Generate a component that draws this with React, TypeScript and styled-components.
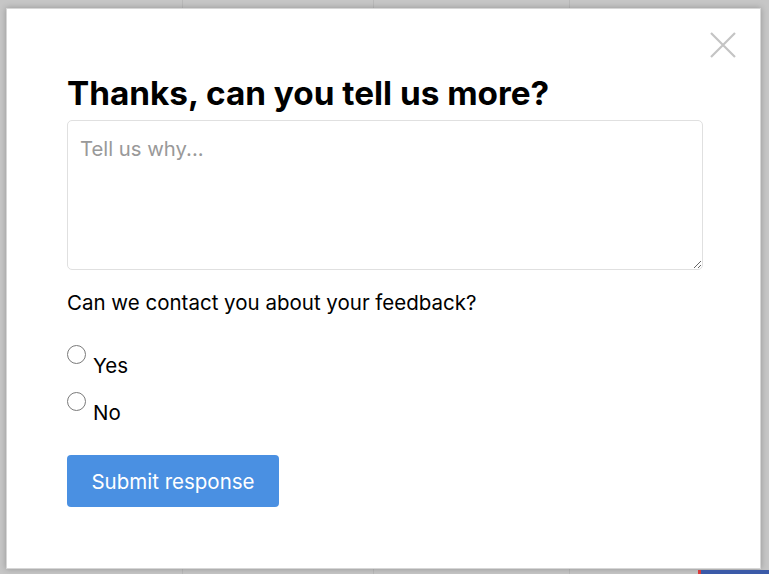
import React, { FunctionComponent, useState } from 'react'
import styled, { createGlobalStyle } from 'styled-components'

const GlobalStyle = createGlobalStyle`
  html, body {
    margin: 0;
    padding: 0;
    height: 100%;
  }
  body {
    background-color: #c9c9c9;
    font-family: Inter, "Liberation Sans", Arial, sans-serif;
    overflow: hidden;
  }
`

const Backdrop = styled.div`
  position: relative;
  width: 769px;
  height: 574px;
  box-sizing: border-box;
  padding: 8px 8px 5px 6px;
  background-color: #c6c6c6;
  background-image: linear-gradient(
    to right,
    transparent 182px,
    #b9b9b9 182px,
    #b9b9b9 183px,
    transparent 183px,
    transparent 373px,
    #b9b9b9 373px,
    #b9b9b9 374px,
    transparent 374px,
    transparent 569px,
    #b9b9b9 569px,
    #b9b9b9 570px,
    transparent 570px
  );
`

const Modal = styled.div`
  position: relative;
  height: 100%;
  box-sizing: border-box;
  background-color: #fff;
  border: 1px solid #d6d6d6;
  box-shadow: 0 0 6px rgba(0, 0, 0, 0.25);
  padding: 64px 57px 0 60px;
  display: flex;
  flex-direction: column;
`

const CloseButton = styled.button`
  position: absolute;
  top: 23px;
  right: 24px;
  width: 26px;
  height: 26px;
  padding: 0;
  border: none;
  background: none;
  cursor: pointer;
  color: #c4c4c4;
`

const Title = styled.h2`
  margin: 0 0 7px;
  font-size: 33.3px;
  line-height: 40px;
  font-weight: 700;
  color: #000;
`

const Reason = styled.textarea`
  display: block;
  width: 100%;
  height: 150px;
  box-sizing: border-box;
  border: 1px solid #e0e0e0;
  border-radius: 5px;
  padding: 16px 12px;
  font-family: inherit;
  font-size: 20.3px;
  line-height: 24px;
  color: #333;
  resize: vertical;
  outline: none;
  &::placeholder {
    color: #999;
  }
`

const Question = styled.p`
  margin: 21px 0 30px;
  font-size: 20.5px;
  line-height: 24px;
  color: #000;
`

const Options = styled.div`
  display: flex;
  flex-direction: column;
  gap: 14px;
`

const Option = styled.label`
  display: flex;
  align-items: flex-start;
  gap: 7px;
  cursor: pointer;
`

const RadioCircle = styled.span<{ checked: boolean }>`
  width: 19px;
  height: 19px;
  box-sizing: border-box;
  border-radius: 50%;
  border: 1px solid ${({ checked }) => (checked ? '#4a90e2' : '#7a7a7a')};
  background: ${({ checked }) => (checked ? 'radial-gradient(#4a90e2 4px, #fff 5px)' : '#fff')};
  flex-shrink: 0;
`

const HiddenRadio = styled.input`
  display: none;
`

const OptionText = styled.span`
  margin-top: 9px;
  font-size: 20.5px;
  line-height: 24px;
  color: #000;
`

const SubmitButton = styled.button`
  align-self: flex-start;
  margin-top: 30px;
  width: 212px;
  height: 52px;
  border: none;
  border-radius: 4px;
  background-color: #4a90e2;
  color: #fff;
  font-family: inherit;
  font-size: 20.5px;
  cursor: pointer;
`

const Taskbar = styled.div`
  position: absolute;
  right: 0;
  bottom: 0;
  width: 68px;
  height: 4px;
  background-color: #3b5aa8;
  border-left: 3px solid #d93a3a;
`

const CloseIcon = () => (
  <svg width="26" height="26" viewBox="0 0 26 26" fill="none">
    <path d="M1 1 L25 25 M25 1 L1 25" stroke="currentColor" strokeWidth="2.2" />
  </svg>
)

const App: FunctionComponent = () => {
  const [contact, setContact] = useState<string>('')
  const [reason, setReason] = useState<string>('')

  return (
    <Backdrop>
      <GlobalStyle />
      <Modal>
        <CloseButton aria-label="Close">
          <CloseIcon />
        </CloseButton>
        <Title>Thanks, can you tell us more?</Title>
        <Reason placeholder="Tell us why..." value={reason} onChange={e => setReason(e.target.value)} />
        <Question>Can we contact you about your feedback?</Question>
        <Options>
          {['Yes', 'No'].map(option => (
            <Option key={option}>
              <HiddenRadio
                type="radio"
                name="contact"
                value={option}
                checked={contact === option}
                onChange={() => setContact(option)}
              />
              <RadioCircle checked={contact === option} />
              <OptionText>{option}</OptionText>
            </Option>
          ))}
        </Options>
        <SubmitButton>Submit response</SubmitButton>
      </Modal>
      <Taskbar />
    </Backdrop>
  )
}

export default App
